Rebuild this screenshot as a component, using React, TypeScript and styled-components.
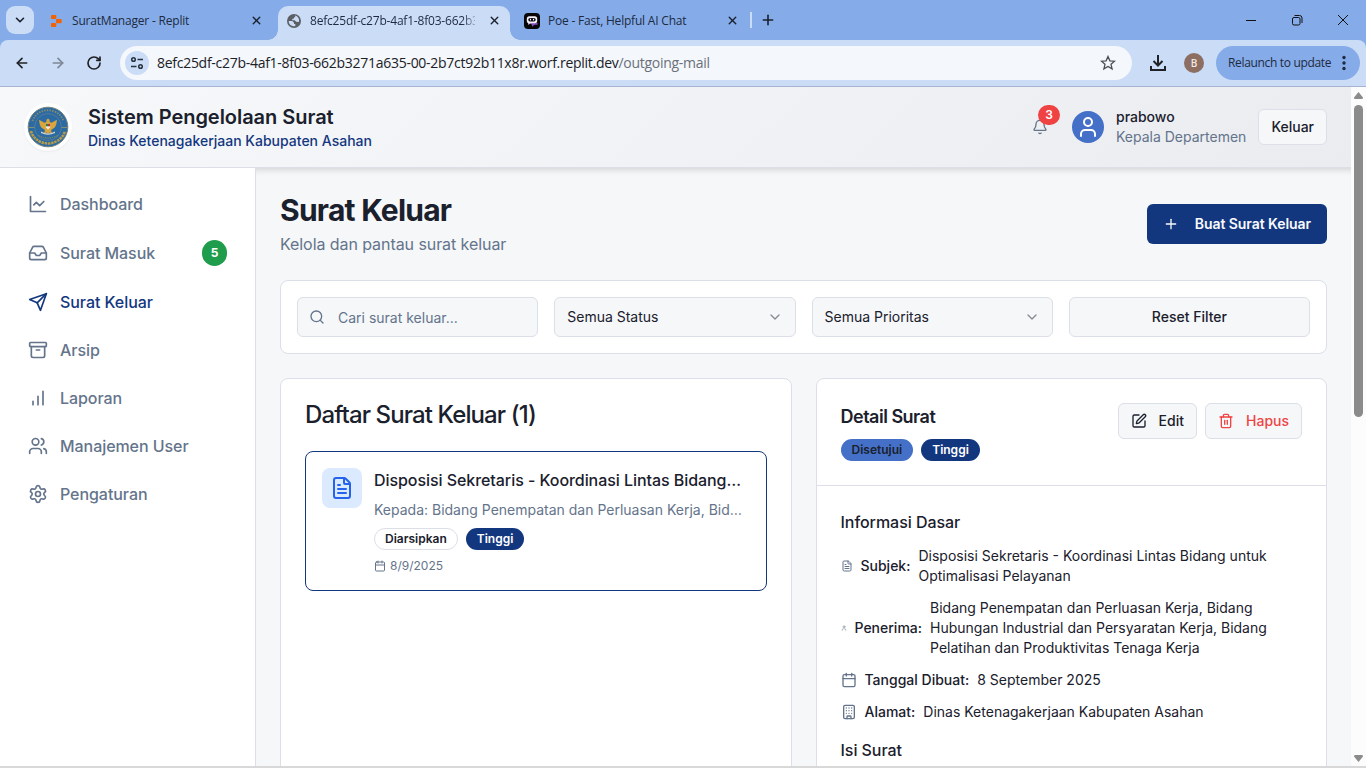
import React from "react";
import styled, { createGlobalStyle, css } from "styled-components";
import {
  Archive, ArrowLeft, ArrowRight, Bell, Building, Calendar, ChevronDown, FileText,
  Inbox, Plus, RotateCw, Search, Settings, SquarePen, Trash2, User, Users, X,
} from "lucide-react";

const color = {
  frame: "#85ace9",
  toolbar: "#cbdcf6",
  navy: "#13377f",
  blue: "#4470c8",
  ink: "#1a202c",
  muted: "#64748b",
  border: "#dcdfe7",
  page: "#f5f7f9",
};

const GlobalStyle = createGlobalStyle`
  * { box-sizing: border-box; }
  body { margin: 0; overflow: hidden; font-family: Inter, "Liberation Sans", sans-serif; color: ${color.ink}; }
  h1, h2, h3, p { margin: 0; }
  button { font: inherit; color: inherit; padding: 0; border: 0; background: none; }
  svg { display: block; flex: none; }
`;

const Window = styled.div`
  display: flex;
  flex-direction: column;
  width: 1366px;
  height: 768px;
  overflow: hidden;
  background: ${color.frame};
`;

/* Browser frame */
const TabStrip = styled.div`
  display: flex;
  align-items: flex-start;
  height: 40px;
  padding: 6px 0 0 6px;
  font-family: "Open Sans", "Noto Sans", sans-serif;
`;
const TabSearch = styled.button`
  display: grid;
  place-items: center;
  width: 28px;
  height: 28px;
  margin-right: 6px;
  border-radius: 9px;
  background: ${color.toolbar};
`;
const Tab = styled.div<{ $active?: boolean }>`
  position: relative;
  display: flex;
  align-items: center;
  width: 232px;
  height: 34px;
  margin-right: 6px;
  padding: 0 9px 5px 8px;
  ${(p) => p.$active && css`
    background: ${color.toolbar};
    border-radius: 10px 10px 0 0;
    &::before, &::after {
      content: "";
      position: absolute;
      bottom: 0;
      width: 10px;
      height: 10px;
    }
    &::before { left: -10px; background: radial-gradient(circle at 0 0, transparent 9.5px, ${color.toolbar} 10px); }
    &::after { right: -10px; background: radial-gradient(circle at 100% 0, transparent 9.5px, ${color.toolbar} 10px); }
  `}
`;
const TabTitle = styled.span<{ $fade?: boolean }>`
  flex: 1;
  margin: 0 13px 0 8px;
  overflow: hidden;
  white-space: nowrap;
  font-size: 12px;
  line-height: 18px;
  letter-spacing: -0.2px;
  color: #1d2a40;
  ${(p) => p.$fade && css`mask-image: linear-gradient(to right, #000 152px, transparent 170px);`}
`;
const TabDivider = styled.i`
  width: 2px;
  height: 16px;
  margin: 6px 8px 0 -4px;
  background: ${color.toolbar};
`;
const NewTab = styled.button`
  height: 28px;
  display: grid;
  place-items: center;
`;
const WindowControls = styled.div`
  display: flex;
  gap: 34px;
  height: 28px;
  align-items: center;
  margin: 0 17px 0 auto;
`;
const Toolbar = styled.div`
  display: flex;
  align-items: center;
  height: 47px;
  padding: 0 6px 1px 14px;
  border-bottom: 1px solid #a5b4d3;
  border-radius: 8px 8px 0 0;
  background: ${color.toolbar};
  color: #202124;
  font-family: "Open Sans", "Noto Sans", sans-serif;
`;
const NavButtons = styled.div`
  display: flex;
  gap: 20px;
  margin-right: 18px;
  svg:nth-child(2) { opacity: 0.45; }
`;
const Omnibox = styled.div`
  display: flex;
  align-items: center;
  width: 1012px;
  height: 34px;
  margin-right: 17px;
  padding: 0 16px 0 5px;
  border-radius: 17px;
  background: #f4f7fc;
`;
const SiteInfo = styled.div`
  display: grid;
  place-items: center;
  width: 24px;
  height: 24px;
  border-radius: 50%;
  background: ${color.toolbar};
`;
const Url = styled.span`
  flex: 1;
  margin-left: 8px;
  font-size: 14px;
  letter-spacing: -0.28px;
  white-space: nowrap;
  span { color: #6b7079; }
`;
const Profile = styled.div`
  display: grid;
  place-items: center;
  width: 20px;
  height: 20px;
  margin: 0 12px 0 17px;
  border-radius: 50%;
  background: #8d6e63;
  color: #f3e9e5;
  font-size: 10px;
  font-weight: 600;
`;
const Relaunch = styled.button`
  display: flex;
  align-items: center;
  justify-content: space-between;
  width: 144px;
  height: 34px;
  padding: 0 14px 0 12px;
  border-radius: 17px;
  background: ${color.frame};
  font-size: 12px;
  letter-spacing: -0.33px;
  color: #1d2a40;
  white-space: nowrap;
`;

/* Web page */
const Viewport = styled.div`
  display: flex;
  height: 681px;
  border-bottom: 2px solid #d8d8d8;
`;
const Page = styled.div`
  display: flex;
  flex-direction: column;
  width: 1351px;
  background: ${color.page};
`;
const Scrollbar = styled.div`
  display: flex;
  flex-direction: column;
  align-items: center;
  width: 15px;
  padding: 5px 0 4px;
  background: #fcfcfc;
`;
const Thumb = styled.div`
  width: 9px;
  height: 312px;
  margin: 6px 0 auto;
  border-radius: 5px;
  background: #8b8b8b;
`;
const Header = styled.header`
  display: flex;
  align-items: center;
  height: 81px;
  flex: none;
  padding: 0 24px;
  border-bottom: 1px solid ${color.border};
  background: linear-gradient(135deg, #f7f8fa, #eaecf0);
`;
const LogoDisc = styled.div`
  display: grid;
  place-items: center;
  width: 48px;
  height: 48px;
  margin-right: 16px;
  border-radius: 50%;
  background: #fff;
  box-shadow: 0 1px 2px rgba(0, 0, 0, 0.05);
`;
const Brand = styled.div`
  h1 { font-size: 20px; line-height: 28px; font-weight: 600; letter-spacing: -0.04px; }
  p { font-size: 14px; line-height: 20px; font-weight: 500; color: ${color.navy}; }
`;
const Notifications = styled.button`
  position: relative;
  margin: 0 24px 0 auto;
  color: ${color.muted};
`;
const AlertCount = styled.span`
  position: absolute;
  top: -14px;
  left: 6px;
  width: 22px;
  height: 20px;
  border-radius: 10px;
  background: #ef4343;
  color: #fff;
  font-size: 12px;
  line-height: 20px;
  font-weight: 600;
  text-align: center;
`;
const Avatar = styled.div`
  display: grid;
  place-items: center;
  width: 32px;
  height: 32px;
  margin-right: 12px;
  border-radius: 50%;
  background: ${color.blue};
  color: #fff;
`;
const Account = styled.div`
  font-size: 14px;
  line-height: 20px;
  margin-right: 12px;
  strong { display: block; font-weight: 500; }
  span { color: ${color.muted}; }
`;
const OutlineButton = styled.button<{ $danger?: boolean; $tall?: boolean }>`
  display: flex;
  align-items: center;
  justify-content: center;
  gap: 12px;
  height: ${(p) => (p.$tall ? 40 : 36)}px;
  padding: 0 12px 1px;
  border: 1px solid ${color.border};
  border-radius: 6px;
  background: ${color.page};
  font-size: 14px;
  font-weight: 500;
  color: ${(p) => (p.$danger ? "#ef4444" : color.ink)};
`;
const Body = styled.div`
  display: flex;
  flex: 1;
  min-height: 0;
`;
const Sidebar = styled.nav`
  width: 256px;
  flex: none;
  padding: 12px;
  border-right: 1px solid ${color.border};
  background: #fff;
`;
const NavItem = styled.a<{ $active?: boolean }>`
  display: flex;
  align-items: center;
  gap: 12px;
  padding: 12px 16px;
  font-size: 16px;
  line-height: 24px;
  font-weight: 500;
  letter-spacing: -0.06px;
  color: ${(p) => (p.$active ? color.navy : color.muted)};
`;
const NavCount = styled.span`
  width: 25px;
  height: 26px;
  margin-left: auto;
  border-radius: 13px;
  background: #1f9d4d;
  color: #fff;
  font-size: 12px;
  line-height: 26px;
  font-weight: 700;
  text-align: center;
`;
const Main = styled.main`
  flex: 1;
  min-width: 0;
  padding: 24px;
  overflow: hidden;
  box-shadow: inset 0 7px 6px -5px rgba(0, 0, 0, 0.14);
`;
const PageHead = styled.div`
  display: flex;
  align-items: center;
  justify-content: space-between;
  margin-bottom: 24px;
  h1 { font-size: 30px; line-height: 36px; font-weight: 700; letter-spacing: -0.75px; }
  p { margin-top: 4px; font-size: 16px; line-height: 24px; letter-spacing: -0.07px; color: ${color.muted}; }
`;
const PrimaryButton = styled.button`
  display: flex;
  align-items: center;
  gap: 16px;
  height: 40px;
  padding: 0 16px 1px;
  border-radius: 6px;
  background: ${color.navy};
  color: #f8fafc;
  font-size: 14px;
  font-weight: 600;
  letter-spacing: -0.07px;
`;
const Card = styled.section`
  border: 1px solid ${color.border};
  border-radius: 8px;
  background: #fff;
`;
const Filters = styled(Card)`
  display: grid;
  grid-template-columns: repeat(4, 1fr);
  gap: 16px;
  padding: 16px;
  margin-bottom: 24px;
`;
const Field = styled.div`
  display: flex;
  align-items: center;
  height: 40px;
  padding: 0 12px 1px;
  border: 1px solid ${color.border};
  border-radius: 6px;
  background: ${color.page};
  font-size: 14px;
  svg:last-child { margin-left: auto; opacity: 0.5; }
`;
const SearchField = styled(Field)`
  gap: 13px;
  padding-left: 11px;
  color: ${color.muted};
  svg:last-of-type { margin: 0; opacity: 1; }
  span { padding-top: 2px; }
`;
const Columns = styled.div`
  display: grid;
  grid-template-columns: repeat(2, minmax(0, 1fr));
  gap: 24px;
`;
const ListCard = styled(Card)`
  min-height: 440px;
  padding: 24px;
  h2 { margin-bottom: 24px; font-size: 24px; line-height: 24px; font-weight: 500; letter-spacing: -0.89px; }
`;
const Mail = styled.article`
  display: flex;
  gap: 12px;
  padding: 16px;
  border: 1px solid ${color.navy};
  border-radius: 8px;
`;
const MailIcon = styled.div`
  display: grid;
  place-items: center;
  width: 40px;
  height: 40px;
  flex: none;
  border-radius: 8px;
  background: #dbeafe;
  color: #2563eb;
`;
const MailText = styled.div`
  flex: 1;
  min-width: 0;
  h3, p { overflow: hidden; text-overflow: ellipsis; white-space: nowrap; }
  h3 { margin-right: 6px; font-size: 16px; line-height: 24px; font-weight: 500; letter-spacing: -0.06px; }
  p { margin: 8px 0; font-size: 14px; line-height: 20px; color: ${color.muted}; }
`;
const Badges = styled.div`
  display: flex;
  gap: 8px;
`;
const tones = {
  outline: css`border-color: ${color.border}; background: #fff;`,
  navy: css`background: ${color.navy}; color: #fff;`,
  blue: css`background: ${color.blue};`,
};
const Badge = styled.span<{ $tone: keyof typeof tones }>`
  height: 22px;
  padding: 0 10px;
  border: 1px solid transparent;
  border-radius: 11px;
  font-size: 12px;
  line-height: 20px;
  font-weight: 600;
  ${(p) => tones[p.$tone]}
`;
const MailDate = styled.div`
  display: flex;
  align-items: center;
  gap: 4px;
  margin-top: 8px;
  font-size: 12px;
  line-height: 16px;
  color: ${color.muted};
`;
const DetailHead = styled.div`
  display: flex;
  justify-content: space-between;
  padding: 24px;
  border-bottom: 1px solid ${color.border};
  h2 { margin-bottom: 8px; font-size: 18px; line-height: 28px; font-weight: 600; letter-spacing: -0.5px; }
`;
const Actions = styled.div`
  display: flex;
  gap: 8px;
`;
const DetailBody = styled.div`
  padding: 24px;
  h3 { font-size: 16px; line-height: 24px; font-weight: 500; letter-spacing: -0.05px; }
`;
const Info = styled.dl`
  display: flex;
  flex-direction: column;
  gap: 12px;
  margin: 12px 0 16px;
`;
const InfoRow = styled.div`
  display: flex;
  align-items: center;
  gap: 8px;
  font-size: 14px;
  line-height: 20px;
  svg { color: ${color.muted}; }
  dt { font-weight: 500; white-space: nowrap; }
  dd { margin: 0; }
`;

const LineChart = () => (
  <svg width="20" height="20" viewBox="0 0 24 24" fill="none" stroke="currentColor" strokeWidth="2" strokeLinecap="round" strokeLinejoin="round">
    <path d="M3 3v18h18" /><path d="m19 9-5 5-4-4-3 3" />
  </svg>
);
const Bars = () => (
  <svg width="20" height="20" viewBox="0 0 24 24" fill="none" stroke="currentColor" strokeWidth="2" strokeLinecap="round">
    <path d="M6 20v-4M12 20V10M18 20V4" />
  </svg>
);
const Plane = () => (
  <svg width="20" height="20" viewBox="0 0 24 24" fill="none" stroke="currentColor" strokeWidth="2" strokeLinecap="round" strokeLinejoin="round">
    <path d="m22 2-7 20-4-9-9-4Z" /><path d="M22 2 11 13" />
  </svg>
);
const ReplitMark = () => (
  <svg width="16" height="16" viewBox="0 0 16 16" fill="#f26207">
    <rect x="3" y="2" width="5.3" height="4" rx=".8" />
    <rect x="8" y="6" width="5.6" height="4.3" rx=".8" />
    <rect x="3" y="10" width="5.3" height="4" rx=".8" />
  </svg>
);
const GlobeMark = () => (
  <svg width="16" height="16" viewBox="0 0 16 16">
    <circle cx="8" cy="8" r="7" fill="#5b6067" />
    <path d="M9.2 2.600c1.700.4 3.100 1.700 3.700 3.400.3 1 .2 2-.1 2.900l-2.600-.2-1.500-1.500H6.300V5.700h1.500l.3-1.500h1.100z" fill="#cbdcf6" />
    <path d="M2.700 8h3.500l1.800 1.700v1.400h1.300v1.900c-3.600.9-6.600-1.500-6.600-5z" fill="#cbdcf6" />
  </svg>
);
const PoeMark = () => (
  <svg width="16" height="16" viewBox="0 0 16 16">
    <rect width="16" height="16" rx="4" fill="#070709" />
    <path d="M5 10h8.500v1.800H10.500L8 13.800v-2z" fill="#8b4fc4" />
    <rect x="2.800" y="3.300" width="10.400" height="6.900" rx="2.500" fill="#f3f0f7" />
    <path d="M4 9h3l-2.500 3z" fill="#f3f0f7" />
    <rect x="4.300" y="4.900" width="7.400" height="3.500" rx="1.700" fill="#16131c" />
    <path d="M6.500 5.800v1.600M9.500 5.800v1.600" stroke="#fff" strokeWidth="1" />
  </svg>
);
const Emblem = () => (
  <svg width="42" height="42" viewBox="0 0 42 42">
    <circle cx="21" cy="21" r="19.800" fill="#2b6aa3" stroke="#71817b" strokeWidth="1" />
    <path d="M5.500 15a16.500 16.500 0 0 1 31 0" fill="none" stroke="#a59a5c" strokeWidth="2" strokeDasharray="1.500 1.200" opacity=".7" />
    <circle cx="21" cy="21" r="13.400" fill="none" stroke="#5f7f96" strokeWidth=".8" />
    <path d="M4 25c2 7 8 12 17 12.500C30 37 36 32 38 25" fill="none" stroke="#b59b4a" strokeWidth="2.600" strokeDasharray="2.500 .7" />
    <path d="M2 21.500h5.500M34.500 21.500H40" stroke="#83906f" strokeWidth="1" />
    <path d="M11.500 29.500q9.500 5 19 0" fill="none" stroke="#93934f" strokeWidth="1" strokeDasharray="1.500 .8" />
    <path d="M21 12.500l1.500 1.300.2 2.200 1.800.8 5.500-3-.7 4.500-1.300 3-2.700 2-1.300.7 1 3.500-2.500-1-1.500 1.500-1.500-1.500-2.500 1 1-3.500-1.300-.7-2.700-2-1.300-3-.7-4.500 5.500 3 1.800-.8.2-2.200z" fill="#d8a63c" />
    <path d="M18.900 17.800h4.200v3.400L21 23.700l-2.100-2.500z" fill="#f1ece0" />
    <path d="M18.900 17.800H21v2.500h-2.100z" fill="#3e7a45" />
    <path d="M21 17.800h2.100v2.500H21z" fill="#bd332a" />
    <path d="M14 25.500q7 4 14 0v1.600q-7 3.500-14 0z" fill="#d7d6cd" />
  </svg>
);
const TuneMark = () => (
  <svg width="14" height="14" viewBox="0 0 14 14" fill="none" stroke="#27303d" strokeWidth="1.500">
    <circle cx="3.500" cy="3.500" r="1.800" /><path d="M7.500 3.500H13M1 10.500h5.500" /><circle cx="10.500" cy="10.500" r="1.800" />
  </svg>
);
const StarMark = () => (
  <svg width="16" height="16" viewBox="0 0 16 16" fill="none" stroke="#4b4f55" strokeWidth="1.300">
    <path d="M8 1.500l1.900 4.300 4.700.4-3.600 3.100 1.100 4.600L8 11.500l-4.100 2.400L5 9.300 1.400 6.200l4.700-.4z" />
  </svg>
);
const DownloadMark = () => (
  <svg width="18" height="18" viewBox="0 0 18 18" fill="none" stroke="#202124" strokeWidth="2">
    <path d="M9 1v10M4.500 7L9 11.500 13.500 7M2 12v4h14v-4" />
  </svg>
);
const DotsMark = () => (
  <svg width="4" height="16" viewBox="0 0 4 16" fill="#1d2a40">
    <circle cx="2" cy="2.500" r="1.700" /><circle cx="2" cy="8" r="1.700" /><circle cx="2" cy="13.500" r="1.700" />
  </svg>
);

const navigation = [
  { label: "Dashboard", icon: <LineChart /> },
  { label: "Surat Masuk", icon: <Inbox size={20} />, count: 5 },
  { label: "Surat Keluar", icon: <Plane />, active: true },
  { label: "Arsip", icon: <Archive size={20} /> },
  { label: "Laporan", icon: <Bars /> },
  { label: "Manajemen User", icon: <Users size={20} /> },
  { label: "Pengaturan", icon: <Settings size={20} /> },
];

const details = [
  { label: "Subjek:", icon: <FileText size={12} />, value: "Disposisi Sekretaris - Koordinasi Lintas Bidang untuk Optimalisasi Pelayanan" },
  { label: "Penerima:", icon: <User size={6} />, value: "Bidang Penempatan dan Perluasan Kerja, Bidang Hubungan Industrial dan Persyaratan Kerja, Bidang Pelatihan dan Produktivitas Tenaga Kerja" },
  { label: "Tanggal Dibuat:", icon: <Calendar size={16} />, value: "8 September 2025" },
  { label: "Alamat:", icon: <Building size={16} />, value: "Dinas Ketenagakerjaan Kabupaten Asahan" },
];

const Browser = () => (
  <>
    <TabStrip>
      <TabSearch><ChevronDown size={14} strokeWidth={2.8} /></TabSearch>
      <Tab><ReplitMark /><TabTitle>SuratManager - Replit</TabTitle><X size={13} strokeWidth={2.6} /></Tab>
      <Tab $active><GlobeMark /><TabTitle $fade>8efc25df-c27b-4af1-8f03-662b3271a635</TabTitle><X size={13} strokeWidth={2.6} /></Tab>
      <Tab><PoeMark /><TabTitle>Poe - Fast, Helpful AI Chat</TabTitle><X size={13} strokeWidth={2.6} /></Tab>
      <TabDivider />
      <NewTab><Plus size={16} strokeWidth={2.4} /></NewTab>
      <WindowControls>
        <svg width="12" height="12" stroke="#111" fill="none"><path d="M1 6.500h10" /></svg>
        <svg width="12" height="12" stroke="#111" fill="none"><rect x="1.500" y="3.500" width="7.500" height="7.500" rx="1.500" /><path d="M3.500 1.500h5a2.500 2.500 0 0 1 2.500 2.500v5" /></svg>
        <svg width="12" height="12" stroke="#111" fill="none"><path d="M1 1l10 10M11 1L1 11" /></svg>
      </WindowControls>
    </TabStrip>
    <Toolbar>
      <NavButtons>
        <ArrowLeft size={16} strokeWidth={2.5} /><ArrowRight size={16} strokeWidth={2.5} /><RotateCw size={16} strokeWidth={2.5} />
      </NavButtons>
      <Omnibox>
        <SiteInfo><TuneMark /></SiteInfo>
        <Url>8efc25df-c27b-4af1-8f03-662b3271a635-00-2b7ct92b11x8r.worf.replit.dev<span>/outgoing-mail</span></Url>
        <StarMark />
      </Omnibox>
      <DownloadMark />
      <Profile>B</Profile>
      <Relaunch>Relaunch to update<DotsMark /></Relaunch>
    </Toolbar>
  </>
);

const App = () => (
  <Window>
    <GlobalStyle />
    <Browser />
    <Viewport>
      <Page>
        <Header>
          <LogoDisc><Emblem /></LogoDisc>
          <Brand>
            <h1>Sistem Pengelolaan Surat</h1>
            <p>Dinas Ketenagakerjaan Kabupaten Asahan</p>
          </Brand>
          <Notifications><Bell size={16} /><AlertCount>3</AlertCount></Notifications>
          <Avatar><User size={24} /></Avatar>
          <Account><strong>prabowo</strong><span>Kepala Departemen</span></Account>
          <OutlineButton>Keluar</OutlineButton>
        </Header>
        <Body>
          <Sidebar>
            {navigation.map((item) => (
              <NavItem key={item.label} $active={item.active}>
                {item.icon}{item.label}{item.count && <NavCount>{item.count}</NavCount>}
              </NavItem>
            ))}
          </Sidebar>
          <Main>
            <PageHead>
              <div>
                <h1>Surat Keluar</h1>
                <p>Kelola dan pantau surat keluar</p>
              </div>
              <PrimaryButton><Plus size={16} />Buat Surat Keluar</PrimaryButton>
            </PageHead>
            <Filters>
              <SearchField><Search size={16} /><span>Cari surat keluar...</span></SearchField>
              <Field>Semua Status<ChevronDown size={16} /></Field>
              <Field>Semua Prioritas<ChevronDown size={16} /></Field>
              <OutlineButton $tall>Reset Filter</OutlineButton>
            </Filters>
            <Columns>
              <ListCard>
                <h2>Daftar Surat Keluar (1)</h2>
                <Mail>
                  <MailIcon><FileText size={24} /></MailIcon>
                  <MailText>
                    <h3>Disposisi Sekretaris - Koordinasi Lintas Bidang untuk Optimalisasi Pelayanan</h3>
                    <p>Kepada: Bidang Penempatan dan Perluasan Kerja, Bidang Hubungan Industrial</p>
                    <Badges><Badge $tone="outline">Diarsipkan</Badge><Badge $tone="navy">Tinggi</Badge></Badges>
                    <MailDate><Calendar size={12} />8/9/2025</MailDate>
                  </MailText>
                </Mail>
              </ListCard>
              <Card>
                <DetailHead>
                  <div>
                    <h2>Detail Surat</h2>
                    <Badges><Badge $tone="blue">Disetujui</Badge><Badge $tone="navy">Tinggi</Badge></Badges>
                  </div>
                  <Actions>
                    <OutlineButton><SquarePen size={16} />Edit</OutlineButton>
                    <OutlineButton $danger><Trash2 size={16} />Hapus</OutlineButton>
                  </Actions>
                </DetailHead>
                <DetailBody>
                  <h3>Informasi Dasar</h3>
                  <Info>
                    {details.map((d) => (
                      <InfoRow key={d.label}>{d.icon}<dt>{d.label}</dt><dd>{d.value}</dd></InfoRow>
                    ))}
                  </Info>
                  <h3>Isi Surat</h3>
                </DetailBody>
              </Card>
            </Columns>
          </Main>
        </Body>
      </Page>
      <Scrollbar>
        <svg width="9" height="7" fill="#8b8b8b"><path d="M4.500 0L9 5.500Q9 7 8 7H1Q0 7 0 5.500z" /></svg>
        <Thumb />
        <svg width="9" height="7" fill="#8b8b8b"><path d="M4.500 7L9 1.500Q9 0 8 0H1Q0 0 0 1.500z" /></svg>
      </Scrollbar>
    </Viewport>
  </Window>
);

export default App;
